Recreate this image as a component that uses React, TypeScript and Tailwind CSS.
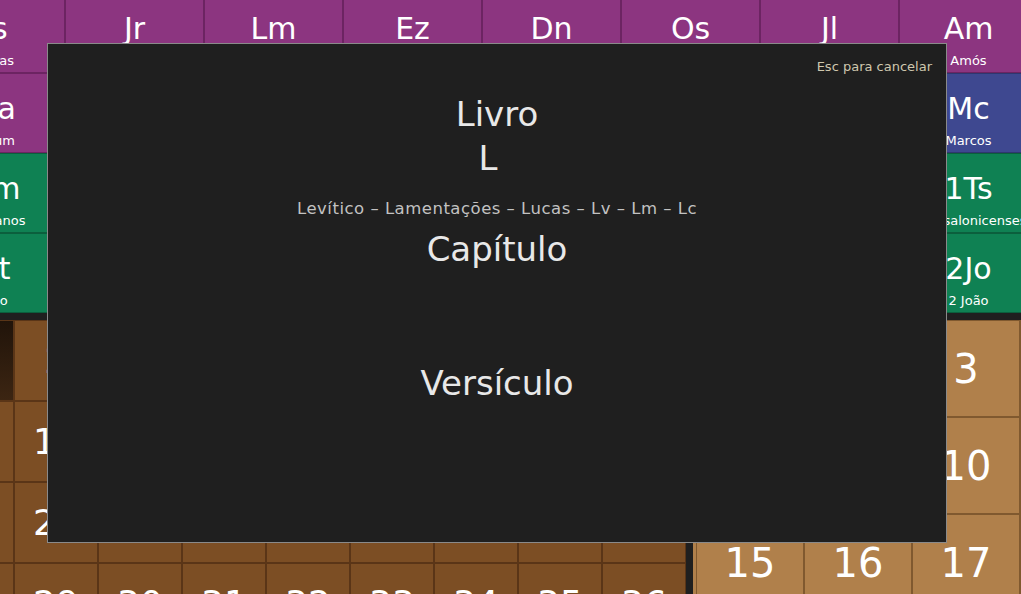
import React from 'react';

type Book = { abbr: string; name: string; tone: 'ot' | 'gospel' | 'epistle' };

const toneCls: Record<Book['tone'], string> = {
  ot: 'bg-[#8c3580] border-[#6c2462]',
  gospel: 'bg-[#3e4890] border-[#2f376f]',
  epistle: 'bg-[#0f8153] border-[#0b5f3d]',
};

const bookRows: Book[][] = [
  [
    { abbr: 'Is', name: 'Isaías', tone: 'ot' },
    { abbr: 'Jr', name: 'Jeremias', tone: 'ot' },
    { abbr: 'Lm', name: 'Lamentações', tone: 'ot' },
    { abbr: 'Ez', name: 'Ezequiel', tone: 'ot' },
    { abbr: 'Dn', name: 'Daniel', tone: 'ot' },
    { abbr: 'Os', name: 'Oséias', tone: 'ot' },
    { abbr: 'Jl', name: 'Joel', tone: 'ot' },
    { abbr: 'Am', name: 'Amós', tone: 'ot' },
  ],
  [
    { abbr: 'Na', name: 'Naum', tone: 'ot' },
    { abbr: 'Hc', name: 'Habacuque', tone: 'ot' },
    { abbr: 'Sf', name: 'Sofonias', tone: 'ot' },
    { abbr: 'Ag', name: 'Ageu', tone: 'ot' },
    { abbr: 'Zc', name: 'Zacarias', tone: 'ot' },
    { abbr: 'Ml', name: 'Malaquias', tone: 'ot' },
    { abbr: 'Mt', name: 'Mateus', tone: 'gospel' },
    { abbr: 'Mc', name: 'Marcos', tone: 'gospel' },
  ],
  [
    { abbr: 'Rm', name: 'Romanos', tone: 'epistle' },
    { abbr: '1Co', name: '1 Coríntios', tone: 'epistle' },
    { abbr: '2Co', name: '2 Coríntios', tone: 'epistle' },
    { abbr: 'Gl', name: 'Gálatas', tone: 'epistle' },
    { abbr: 'Ef', name: 'Efésios', tone: 'epistle' },
    { abbr: 'Fp', name: 'Filipenses', tone: 'epistle' },
    { abbr: 'Cl', name: 'Colossenses', tone: 'epistle' },
    { abbr: '1Ts', name: '1 Tessalonicenses', tone: 'epistle' },
  ],
  [
    { abbr: 'Tt', name: 'Tito', tone: 'epistle' },
    { abbr: 'Fm', name: 'Filemom', tone: 'epistle' },
    { abbr: 'Hb', name: 'Hebreus', tone: 'epistle' },
    { abbr: 'Tg', name: 'Tiago', tone: 'epistle' },
    { abbr: '1Pe', name: '1 Pedro', tone: 'epistle' },
    { abbr: '2Pe', name: '2 Pedro', tone: 'epistle' },
    { abbr: '1Jo', name: '1 João', tone: 'epistle' },
    { abbr: '2Jo', name: '2 João', tone: 'epistle' },
  ],
];

const leftChapters = Array.from({ length: 36 }, (_, i) => i + 1);
const rightChapters = Array.from({ length: 21 }, (_, i) => i + 1);

const BookTile: React.FC<{ book: Book }> = ({ book }) => (
  <div
    className={`h-[80px] border flex flex-col items-center overflow-hidden whitespace-nowrap text-white ${toneCls[book.tone]}`}
  >
    <span className="mt-[17px] text-[30px] leading-[36px]">{book.abbr}</span>
    <span className="mt-[6px] text-[13px] leading-[16px]">{book.name}</span>
  </div>
);

export default function App() {
  return (
    <div className="w-[1021px] h-[594px] overflow-hidden relative bg-[#1f1f1f] font-['DejaVu_Sans',sans-serif]">
      {/* book picker, scrolled */}
      <div className="-mt-[7px] -ml-[74px] grid grid-cols-[repeat(8,139px)]">
        {bookRows.flat().map((b) => (
          <BookTile key={b.abbr} book={b} />
        ))}
      </div>

      {/* chapter grids */}
      <div className="mt-[7px] flex">
        <div className="-ml-[70px] shrink-0 grid grid-cols-[repeat(9,84px)] auto-rows-[81px] bg-[#7c4e24]">
          {leftChapters.map((n) => (
            <div
              key={n}
              className={`border border-[#5a3517] flex items-center justify-center text-white text-[36px] ${
                n === 1 ? 'bg-gradient-to-b from-[#21140a] to-[#3c2512]' : ''
              }`}
            >
              {n}
            </div>
          ))}
        </div>
        <div className="ml-[7px] pl-[3px] shrink-0 bg-[#b0804b] grid grid-cols-[repeat(7,108px)] auto-rows-[97px]">
          {rightChapters.map((n) => (
            <div
              key={n}
              className="border border-[#80592f] flex items-center justify-center text-white text-[40px]"
            >
              {n}
            </div>
          ))}
        </div>
      </div>

      {/* reference prompt */}
      <div className="absolute left-[47px] top-[43px] w-[900px] h-[500px] border border-[#8a8a8a] bg-[#1f1f1f] flex flex-col items-center text-[#e8e8e8]">
        <div className="self-stretch pt-[15px] pr-[14px] text-right text-[13px] leading-[16px] text-[#cfc7ae]">
          Esc para cancelar
        </div>
        <div className="mt-[17px] text-[34px] leading-[44px]">Livro</div>
        <div className="pr-[18px] text-[34px] leading-[44px]">L</div>
        <div className="mt-[19px] text-[16.5px] leading-[20px] tracking-[0.5px] text-[#c2c2c2]">
          Levítico – Lamentações – Lucas – Lv – Lm – Lc
        </div>
        <div className="mt-[8px] text-[34px] leading-[44px]">Capítulo</div>
        <div className="mt-[90px] text-[34px] leading-[44px]">Versículo</div>
      </div>
    </div>
  );
}
